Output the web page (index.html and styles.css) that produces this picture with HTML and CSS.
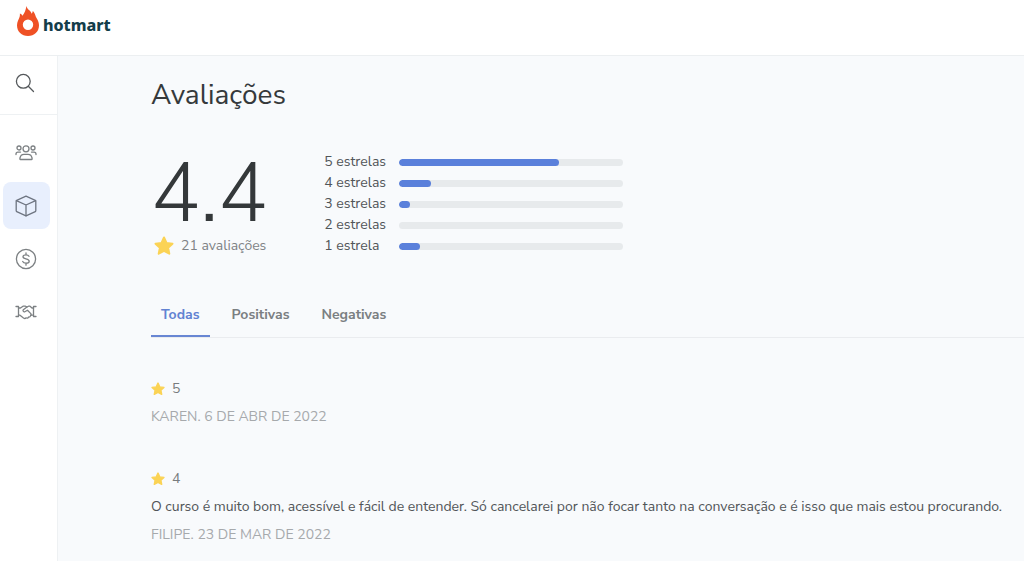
FILE: index.html
```
<!DOCTYPE html>
<html lang="pt-BR">
<head>
  <meta charset="UTF-8" />
  <meta name="viewport" content="width=device-width, initial-scale=1.0"/>
  <title>Avaliações - Hotmart</title>
  <link rel="stylesheet" href="styles.css">
</head>
<body>

  <header class="topbar">
    <a class="logo" href="#">
      <svg class="logo-mark" viewBox="0 0 24 32" aria-hidden="true">
        <path fill="#ef5125" fill-rule="evenodd" d="M10.500 1C10.900 3.200 12.300 4.300 13.600 5.600C14.600 6.600 15.300 7.500 15.700 8.700C16.300 8 16.600 7 16.800 6.100C18.300 7.400 18.900 9 19.600 11C20.300 13.500 23 15.600 23 20.300C23 26.800 18.300 31 12 31S1 26.800 1 20.300C1 16.500 3 14.500 3.700 11.500C3.900 10.500 4 9.500 3.900 8.500C5 8.900 5.900 9.700 6.500 10.700C8.800 8 9.800 4.500 10.500 1ZM12 14.500A5.200 5.200 0 1 0 12 24.900A5.200 5.200 0 1 0 12 14.500Z"/>
      </svg>
      <span class="logo-text">hotmart</span>
    </a>
  </header>

  <div class="layout">
    <aside class="sidebar">
      <button class="search-btn" type="button" aria-label="Buscar">
        <svg width="20" height="20" viewBox="0 0 20 20"><circle cx="8.300" cy="8.300" r="6.900"/><path d="M13.300 13.300L18.500 18.500"/></svg>
      </button>

      <nav class="menu">
        <a class="menu-item" href="#" aria-label="Afiliados">
          <svg width="22" height="22" viewBox="0 0 22 22">
            <circle cx="11" cy="6.800" r="3"/>
            <circle cx="4" cy="6" r="2"/>
            <circle cx="18" cy="6" r="2"/>
            <path d="M5.500 17.500C4.800 17.500 4.800 17 5 16C5.400 13.500 7 12.300 9 12.300H13C15 12.300 16.600 13.500 17 16C17.200 17 17.200 17.500 16.500 17.500Z"/>
            <path d="M1 12.500V12C1 10.800 1.900 10.100 3 10.100H5.500M21 12.500V12C21 10.800 20.100 10.100 19 10.100H16.500"/>
          </svg>
        </a>
        <a class="menu-item active" href="#" aria-label="Produtos">
          <svg width="22" height="22" viewBox="0 0 22 22">
            <path d="M11 1.200L20.300 5.300Q20.800 5.600 20.800 6.200V15.800Q20.800 16.400 20.300 16.700L11 20.800L1.700 16.700Q1.200 16.400 1.200 15.800V6.200Q1.200 5.600 1.700 5.300Z"/>
            <path d="M1.400 5.700L11 10L20.600 5.700M11 10V20.800"/>
          </svg>
        </a>
        <a class="menu-item" href="#" aria-label="Vendas">
          <svg width="22" height="22" viewBox="0 0 22 22">
            <circle cx="11" cy="11" r="9.600"/>
            <path d="M11 4.800V6.800M11 15.200V17.200M14 8.300C13.500 7.300 12.500 6.800 11 6.800C9.200 6.800 8 7.500 8 8.800C8 10.200 9.300 10.500 11 10.900C12.800 11.300 14.200 11.800 14.200 13.200C14.200 14.500 12.900 15.200 11 15.200C9.400 15.200 8.200 14.600 7.700 13.500"/>
          </svg>
        </a>
        <a class="menu-item" href="#" aria-label="Parcerias">
          <svg width="22" height="22" viewBox="0 0 22 22">
            <path d="M1 5.500H3.500V15.500H1M21 5.500H18.500V15.500H21"/>
            <path d="M3.500 7H5.500L8 5.200H10.500L12 6L13.500 5.200H15L17 7H18.500M3.500 14.200H5L8.500 17C9.500 17.700 10.500 17.500 11 16.800C12 17.500 13.200 17 13.500 16C14.500 16.300 15.500 15.600 15.800 14.200H18.500"/>
            <path d="M12 6L8.300 8.800C7.500 9.600 8.500 11.200 9.800 10.800L12.500 9.200L15.800 12.600C16.300 13.100 16.200 13.800 15.800 14.200"/>
          </svg>
        </a>
      </nav>
    </aside>

    <main class="content">
      <h1>Avaliações</h1>

      <section class="summary">
        <div class="score">
          <div class="score-value">4.4</div>
          <div class="score-total">
            <svg class="star-big" viewBox="0 0 20 20" aria-hidden="true"><path d="M10 1.500L12.500 7L18.500 7.700L14.100 11.800L15.300 17.700L10 14.800L4.700 17.700L5.900 11.800L1.500 7.700L7.500 7Z"/></svg>
            <span>21 avaliações</span>
          </div>
        </div>

        <div class="bars">
          <span>5 estrelas</span><div class="bar"><div class="fill" style="width: 71.4%"></div></div>
          <span>4 estrelas</span><div class="bar"><div class="fill" style="width: 14.3%"></div></div>
          <span>3 estrelas</span><div class="bar"><div class="fill" style="width: 4.8%"></div></div>
          <span>2 estrelas</span><div class="bar"><div class="fill" style="width: 0%"></div></div>
          <span>1 estrela</span><div class="bar"><div class="fill" style="width: 9.5%"></div></div>
        </div>
      </section>

      <div class="tabs" role="tablist">
        <button class="tab active" type="button" role="tab" aria-selected="true">Todas</button>
        <button class="tab" type="button" role="tab" aria-selected="false">Positivas</button>
        <button class="tab" type="button" role="tab" aria-selected="false">Negativas</button>
      </div>

      <section class="reviews">
        <article class="review">
          <div class="rating">
            <svg class="star" viewBox="0 0 20 20" aria-hidden="true"><path d="M10 1.500L12.500 7L18.500 7.700L14.100 11.800L15.300 17.700L10 14.800L4.700 17.700L5.900 11.800L1.500 7.700L7.500 7Z"/></svg>
            <span>5</span>
          </div>
          <p class="author">KAREN. 6 DE ABR DE 2022</p>
        </article>

        <article class="review">
          <div class="rating">
            <svg class="star" viewBox="0 0 20 20" aria-hidden="true"><path d="M10 1.500L12.500 7L18.500 7.700L14.100 11.800L15.300 17.700L10 14.800L4.700 17.700L5.900 11.800L1.500 7.700L7.500 7Z"/></svg>
            <span>4</span>
          </div>
          <p class="comment">O curso é muito bom, acessível e fácil de entender. Só cancelarei por não focar tanto na conversação e é isso que mais estou procurando.</p>
          <p class="author">FILIPE. 23 DE MAR DE 2022</p>
        </article>
      </section>
    </main>
  </div>

</body>
</html>
```
FILE: styles.css
```
* {
  box-sizing: border-box;
}

body {
  margin: 0;
  min-height: 100vh;
  display: flex;
  flex-direction: column;
  background: #f8fafc;
  color: #515558;
  font-family: "Nunito Sans", Nunito, Lato, sans-serif;
  font-size: 14px;
  line-height: 20px;
}

button {
  background: none;
  border: none;
  font: inherit;
  cursor: pointer;
}

.topbar {
  height: 56px;
  padding: 5px 16px;
  background: #fff;
  border-bottom: 1px solid #eceff1;
}

.logo {
  display: inline-flex;
  align-items: flex-end;
  gap: 3px;
  color: #143d4a;
  text-decoration: none;
}

.logo-mark {
  width: 24px;
  height: 32px;
}

.logo-text {
  font-family: "Noto Sans", sans-serif;
  font-size: 16px;
  font-weight: 800;
  line-height: 24px;
}

.layout {
  flex: 1;
  display: flex;
}

.sidebar {
  flex: none;
  width: 58px;
  background: #fff;
  border-right: 1px solid #eef1f3;
}

.sidebar svg {
  fill: none;
  stroke: #7c8083;
  stroke-width: 1.3;
  stroke-linecap: round;
  stroke-linejoin: round;
}

.search-btn {
  display: flex;
  width: 100%;
  height: 59px;
  padding: 17px 15px;
  border-bottom: 1px solid #eef1f3;
}

.sidebar .search-btn svg {
  stroke: #55595c;
}

.menu {
  display: flex;
  flex-direction: column;
  gap: 6px;
  padding: 14px 7px 14px 3px;
}

.menu-item {
  display: flex;
  align-items: center;
  justify-content: center;
  height: 47px;
  padding-right: 2px;
  border-radius: 8px;
}

.menu-item.active {
  background: #e8effd;
}

.sidebar .active svg {
  stroke: #6d7480;
}

.content {
  flex: 1;
  min-width: 0;
  padding: 20px 0 16px 93px;
}

h1 {
  margin: 0;
  color: #35393b;
  font-size: 28px;
  font-weight: 400;
  line-height: 38px;
}

.summary {
  display: flex;
  gap: 57px;
  padding-top: 38px;
}

.score-value {
  color: #34383a;
  font-size: 82px;
  font-weight: 300;
  line-height: 84px;
}

.score-total {
  display: flex;
  align-items: center;
  gap: 7px;
  padding-left: 3px;
  color: #7f8386;
}

.star-big,
.star {
  width: 20px;
  height: 20px;
  fill: #fbd355;
  stroke: #fbd355;
  stroke-width: 2;
  stroke-linejoin: round;
}

.star {
  width: 14px;
  height: 14px;
}

.bars {
  display: grid;
  grid-template-columns: auto 224px;
  column-gap: 13px;
  row-gap: 1px;
  align-content: start;
  align-items: center;
  white-space: nowrap;
}

.bar {
  height: 7px;
  background: #e7eaec;
  border-radius: 4px;
  overflow: hidden;
}

.fill {
  height: 100%;
  background: #5a80db;
  border-radius: 4px;
}

.tabs {
  display: flex;
  gap: 12px;
  margin-top: 39px;
  border-bottom: 1px solid #eaecef;
}

.tab {
  padding: 10px;
  border-bottom: 2px solid transparent;
  color: #7b7f82;
  font-weight: 700;
}

.tab.active {
  border-bottom-color: #6886d3;
  color: #6282d2;
}

.reviews {
  display: flex;
  flex-direction: column;
  gap: 42px;
  padding-top: 41px;
}

.review {
  display: flex;
  flex-direction: column;
  gap: 8px;
}

.rating {
  display: flex;
  align-items: center;
  gap: 7px;
  color: #777b7e;
}

.comment,
.author {
  margin: 0;
}

.author {
  color: #a6a9ac;
}
```
